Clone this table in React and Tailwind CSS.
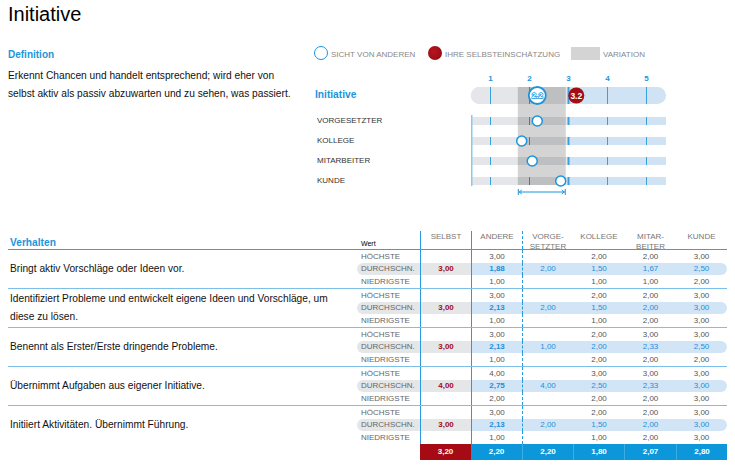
import React from 'react';

const BLUE = '#1a95dc';

const rows = [
  {
    text: 'Bringt aktiv Vorschläge oder Ideen vor.',
    selbst: '3,00',
    cols: [['3,00', '1,88', '1,00'], [null, '2,00', null], ['2,00', '1,50', '1,00'], ['2,00', '1,67', '1,00'], ['3,00', '2,50', '2,00']],
  },
  {
    text: 'Identifiziert Probleme und entwickelt eigene Ideen und Vorschläge, um diese zu lösen.',
    selbst: '3,00',
    cols: [['3,00', '2,13', '1,00'], [null, '2,00', null], ['2,00', '1,50', '1,00'], ['2,00', '2,00', '2,00'], ['3,00', '3,00', '3,00']],
  },
  {
    text: 'Benennt als Erster/Erste dringende Probleme.',
    selbst: '3,00',
    cols: [['3,00', '2,13', '1,00'], [null, '1,00', null], ['2,00', '2,00', '2,00'], ['3,00', '2,33', '2,00'], ['3,00', '2,50', '2,00']],
  },
  {
    text: 'Übernimmt Aufgaben aus eigener Initiative.',
    selbst: '4,00',
    cols: [['4,00', '2,75', '2,00'], [null, '4,00', null], ['3,00', '2,50', '2,00'], ['3,00', '2,33', '2,00'], ['3,00', '3,00', '3,00']],
  },
  {
    text: 'Initiiert Aktivitäten. Übernimmt Führung.',
    selbst: '3,00',
    cols: [['3,00', '2,13', '1,00'], [null, '2,00', null], ['2,00', '1,50', '1,00'], ['2,00', '2,00', '2,00'], ['3,00', '3,00', '3,00']],
  },
];

const totals = ['2,20', '2,20', '1,80', '2,07', '2,80'];

const labels = ['HÖCHSTE', 'DURCHSCHN.', 'NIEDRIGSTE'];

// value on the 1..5 scale -> x inside the chart svg
const sx = (v) => (v - 0.5) * 39;

const others = [
  { name: 'VORGESETZTER', v: 2.2, y: 51 },
  { name: 'KOLLEGE', v: 1.8, y: 71 },
  { name: 'MITARBEITER', v: 2.07, y: 91 },
  { name: 'KUNDE', v: 2.8, y: 111 },
];

const Bar = ({ y, h }) => (
  <g>
    <rect x="0" y={y} width="97.5" height={h} fill="#e4e6e9" />
    <rect x="97.5" y={y} width="97.5" height={h} fill="#cfe3f5" />
    {[1, 2, 3, 4, 5].map((v) => (
      <line key={v} x1={sx(v)} x2={sx(v)} y1={y} y2={y + h} stroke="#3a9fdd" strokeWidth={v === 3 ? 2 : 1} />
    ))}
  </g>
);

const Chart = () => (
  <svg width="197" height="130" viewBox="0 0 197 130">
    {[1, 2, 3, 4, 5].map((v) => (
      <text key={v} x={sx(v)} y="11" fontSize="8" fontWeight="bold" fill={BLUE} textAnchor="middle">
        {v}
      </text>
    ))}
    {/* main bar */}
    <rect x="0" y="17" width="195" height="17" rx="8.5" fill="#cfe3f5" />
    <path d="M8.5 17 H97.5 V34 H8.5 A8.5 8.5 0 0 1 8.5 17 Z" fill="#e4e6e9" />
    {[1, 2, 3, 4, 5].map((v) => (
      <line key={v} x1={sx(v)} x2={sx(v)} y1="17" y2="34" stroke="#3a9fdd" strokeWidth={v === 3 ? 2 : 1} />
    ))}
    {others.map((o) => (
      <Bar key={o.name} y={o.y - 4} h={8} />
    ))}
    <line x1="0.75" x2="0.75" y1="45" y2="116" stroke="#8cc8ee" strokeWidth="1.5" />
    {/* variation */}
    <rect x={sx(1.7)} y="17" width={sx(2.93) - sx(1.7)} height="98" fill="#000" fillOpacity="0.17" />
    {others.map((o) => (
      <circle key={o.name} cx={sx(o.v)} cy={o.y} r="5" fill="#fff" stroke={BLUE} strokeWidth="1.5" />
    ))}
    <circle cx={sx(2.2)} cy="25.5" r="8.5" fill="#fff" stroke={BLUE} strokeWidth="1.8" />
    <text x={sx(2.2)} y="28.3" fontSize="8" fontWeight="bold" fill="#fff" stroke={BLUE} strokeWidth="1.3" paintOrder="stroke" textAnchor="middle">
      2.2
    </text>
    <circle cx={sx(3.2)} cy="25.5" r="8" fill="#a30d15" />
    <text x={sx(3.2)} y="28.5" fontSize="8.5" fontWeight="bold" fill="#fff" textAnchor="middle">
      3.2
    </text>
    {/* variation span arrow */}
    <line x1={sx(1.7) + 1} x2={sx(2.93) - 1} y1="122" y2="122" stroke={BLUE} strokeWidth="1" />
    <line x1={sx(1.7) + 0.5} x2={sx(1.7) + 0.5} y1="119" y2="125" stroke={BLUE} strokeWidth="1" />
    <line x1={sx(2.93) - 0.5} x2={sx(2.93) - 0.5} y1="119" y2="125" stroke={BLUE} strokeWidth="1" />
    <path d={`M${sx(1.7) + 4} 120 L${sx(1.7) + 1.5} 122 L${sx(1.7) + 4} 124`} fill="none" stroke={BLUE} strokeWidth="1" />
    <path d={`M${sx(2.93) - 4} 120 L${sx(2.93) - 1.5} 122 L${sx(2.93) - 4} 124`} fill="none" stroke={BLUE} strokeWidth="1" />
  </svg>
);

const SubRow = ({ idx, row }) => {
  const mid = idx === 1;
  const h = mid ? 'h-[12px]' : 'h-[13px]';
  const num = mid ? 'text-[#1c90d8]' : 'text-[#555]';
  return (
    <div
      className={`flex ${h} ${
        mid ? 'rounded-[6px] bg-[linear-gradient(to_right,#e5e6e8_114px,#d2e5f6_114px)]' : ''
      }`}
    >
      <div className="w-[63px] pl-[4px] flex items-center text-[8px] text-[#666]">{labels[idx]}</div>
      <div className="w-[51px] border-l-[1.5px] border-[#2a9ae0] flex items-center justify-center text-[8px] font-bold text-[#a30d15]">
        {mid ? row.selbst : ''}
      </div>
      <div className={`w-[51px] border-l-[1.5px] border-[#2a9ae0] flex items-center justify-center text-[8px] ${num} ${mid ? 'font-bold' : ''}`}>
        {row.cols[0][idx]}
      </div>
      <div className={`w-[51px] border-l border-dashed border-[#2a9ae0] flex items-center justify-center text-[8px] ${num}`}>
        {row.cols[1][idx]}
      </div>
      <div className={`w-[52px] flex items-center justify-center text-[8px] ${num}`}>{row.cols[2][idx]}</div>
      <div className={`w-[51px] flex items-center justify-center text-[8px] ${num}`}>{row.cols[3][idx]}</div>
      <div className={`w-[51px] flex items-center justify-center text-[8px] ${num}`}>{row.cols[4][idx]}</div>
    </div>
  );
};

const App = () => (
  <div className="w-[735px] h-[473px] bg-white overflow-hidden font-['Liberation_Sans',Arial,sans-serif] text-[#111]">
    <h1 className="pl-[8px] pt-[2px] text-[20px] leading-[24px] text-black">Initiative</h1>

    {/* top: definition + profile chart */}
    <div className="flex mt-[14px]">
      <div className="w-[314px] pl-[8px] pr-[20px]">
        <h2 className="mt-[8px] text-[10px] leading-[14px] font-bold text-[#1a95dc]">Definition</h2>
        <p className="mt-[5px] text-[10.2px] leading-[18px]">
          Erkennt Chancen und handelt entsprechend; wird eher von selbst aktiv als passiv abzuwarten und zu sehen, was passiert.
        </p>
      </div>
      <div className="flex-1">
        <div className="mt-[4px] flex items-end h-[16px] text-[8px] leading-[10px] text-[#888]">
          <div className="w-[114px] flex items-end">
            <span className="w-[14px] h-[14px] rounded-full border-[1.5px] border-[#1a95dc]" />
            <span className="ml-[3px]">SICHT VON ANDEREN</span>
          </div>
          <div className="w-[143px] flex items-end">
            <span className="w-[14px] h-[14px] rounded-full bg-[radial-gradient(circle_at_40%_40%,#b81520,#8e0a10)]" />
            <span className="ml-[3px]">IHRE SELBSTEINSCHÄTZUNG</span>
          </div>
          <div className="flex items-end">
            <span className="w-[29px] h-[13px] bg-[#d4d4d4]" />
            <span className="ml-[3px]">VARIATION</span>
          </div>
        </div>
        <div className="mt-[10px] flex">
          <div className="w-[157px] pt-[17px]">
            <div className="h-[15px] pl-[1px] flex items-center text-[10.2px] font-bold text-[#1a95dc]">Initiative</div>
            <div className="mt-[9px] pl-[3px] text-[8px] text-[#333]">
              {others.map((o) => (
                <div key={o.name} className="h-[20px] flex items-center">
                  {o.name}
                </div>
              ))}
            </div>
          </div>
          <Chart />
        </div>
      </div>
    </div>

    {/* behaviour table */}
    <div className="mt-[31px] mx-[8px]">
      <div className="flex h-[19px] border-b-[1.5px] border-[#3aa0dc]">
        <div className="w-[349px] pl-[2px] flex items-end text-[10.2px] leading-[13px] font-bold text-[#1a95dc]">Verhalten</div>
        <div className="w-[63px] pl-[4px] flex items-end text-[7px] leading-[10px] text-black">Wert</div>
        <div className="w-[51px] border-l-[1.5px] border-[#2a9ae0] text-center text-[8px] leading-[10px] text-[#777] pt-[1px]">SELBST</div>
        <div className="w-[51px] border-l-[1.5px] border-[#2a9ae0] text-center text-[8px] leading-[10px] text-[#777] pt-[1px]">ANDERE</div>
        <div className="w-[51px] border-l border-dashed border-[#2a9ae0] text-center text-[8px] leading-[10px] text-[#777] pt-[1px]">
          VORGE-
          <br />
          SETZTER
        </div>
        <div className="w-[52px] text-center text-[8px] leading-[10px] text-[#777] pt-[1px]">KOLLEGE</div>
        <div className="w-[51px] text-center text-[8px] leading-[10px] text-[#777] pt-[1px]">
          MITAR-
          <br />
          BEITER
        </div>
        <div className="w-[51px] text-center text-[8px] leading-[10px] text-[#777] pt-[1px]">KUNDE</div>
      </div>

      {rows.map((row, i) => (
        <div key={i} className={`flex ${i < rows.length - 1 ? 'border-b border-[#7cbfe9]' : ''}`}>
          <div className="w-[349px] pl-[2px] pr-[8px] flex items-center text-[10.2px] leading-[18px]">{row.text}</div>
          <div className="flex flex-col">
            {[0, 1, 2].map((idx) => (
              <SubRow key={idx} idx={idx} row={row} />
            ))}
          </div>
        </div>
      ))}

      <div className="flex h-[16px] text-[8px] font-bold text-white">
        <div className="w-[412px]" />
        <div className="w-[51px] bg-[#a50a15] flex items-center justify-center">3,20</div>
        {totals.map((t, i) => (
          <div
            key={i}
            className={`${i === 3 ? 'w-[52px]' : 'w-[51px]'} bg-[#0c97db] flex items-center justify-center ${
              i > 0 ? 'border-l border-[#3aaee4]' : ''
            }`}
          >
            {t}
          </div>
        ))}
      </div>
    </div>
  </div>
);

export default App;
